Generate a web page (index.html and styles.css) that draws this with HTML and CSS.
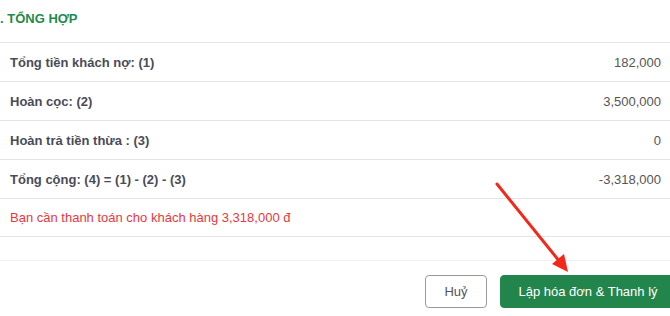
FILE: index.html
```html
<!DOCTYPE html>
<html>
<head>
    <title>Tổng hợp thanh lý</title>
    <link rel="stylesheet" href="styles.css">
</head>
<body>
    <div class="panel">
        <div class="section-title">. TỔNG HỢP</div>
        <div class="summary">
            <div class="row">
                <span class="label">Tổng tiền khách nợ: (1)</span>
                <span class="value">182,000</span>
            </div>
            <div class="row">
                <span class="label">Hoàn cọc: (2)</span>
                <span class="value">3,500,000</span>
            </div>
            <div class="row">
                <span class="label">Hoàn trả tiền thừa : (3)</span>
                <span class="value">0</span>
            </div>
            <div class="row">
                <span class="label">Tổng cộng: (4) = (1) - (2) - (3)</span>
                <span class="value">-3,318,000</span>
            </div>
            <div class="row notice">
                <span>Bạn cần thanh toán cho khách hàng 3,318,000 đ</span>
            </div>
        </div>
        <div class="spacer"></div>
        <div class="footer">
            <button type="button" class="btn btn-cancel">Huỷ</button>
            <button type="button" class="btn btn-primary">Lập hóa đơn &amp; Thanh lý</button>
        </div>

        <svg class="pointer" width="100" height="110" viewBox="0 0 100 110">
            <line x1="17" y1="9" x2="80" y2="87" stroke="#f2281a" stroke-width="3" stroke-linecap="round"/>
            <polygon points="88,97 72,89 84,79" fill="#f2281a"/>
        </svg>
    </div>
</body>
</html>
```

FILE: styles.css
```css
body {
    margin: 0;
    font-family: "Liberation Sans", Arial, Helvetica, sans-serif;
    font-size: 13px;
    background-color: #fff;
    overflow: hidden;
}
.panel {
    position: relative;
    width: 670px;
}
.section-title {
    height: 43px;
    box-sizing: border-box;
    padding-top: 11px;
    line-height: 16px;
    font-weight: bold;
    color: #1f8a4d;
    border-bottom: 1px solid #e4e4e4;
}
.row {
    display: flex;
    justify-content: space-between;
    align-items: center;
    height: 38px;
    padding: 0 9px 0 10px;
    border-bottom: 1px solid #e4e4e4;
}
.label {
    font-weight: bold;
    color: #4b4b57;
}
.value {
    color: #555;
}
.notice {
    height: 37px;
    color: #e8383d;
}
.spacer {
    height: 23px;
    border-bottom: 1px solid #f0f0f0;
}
.footer {
    display: flex;
    justify-content: flex-end;
    gap: 13px;
    padding-top: 14px;
    margin-right: -6px;
}
.btn {
    height: 33px;
    border-radius: 4px;
    font-family: "Liberation Sans", Arial, sans-serif;
    font-size: 13px;
    cursor: pointer;
}
.btn-cancel {
    width: 62px;
    background-color: #fff;
    color: #555;
    border: 1px solid #9a9a9a;
}
.btn-primary {
    width: 176px;
    background-color: #22864c;
    color: #fff;
    border: 1px solid #22864c;
}
.pointer {
    position: absolute;
    left: 480px;
    top: 175px;
}
```
